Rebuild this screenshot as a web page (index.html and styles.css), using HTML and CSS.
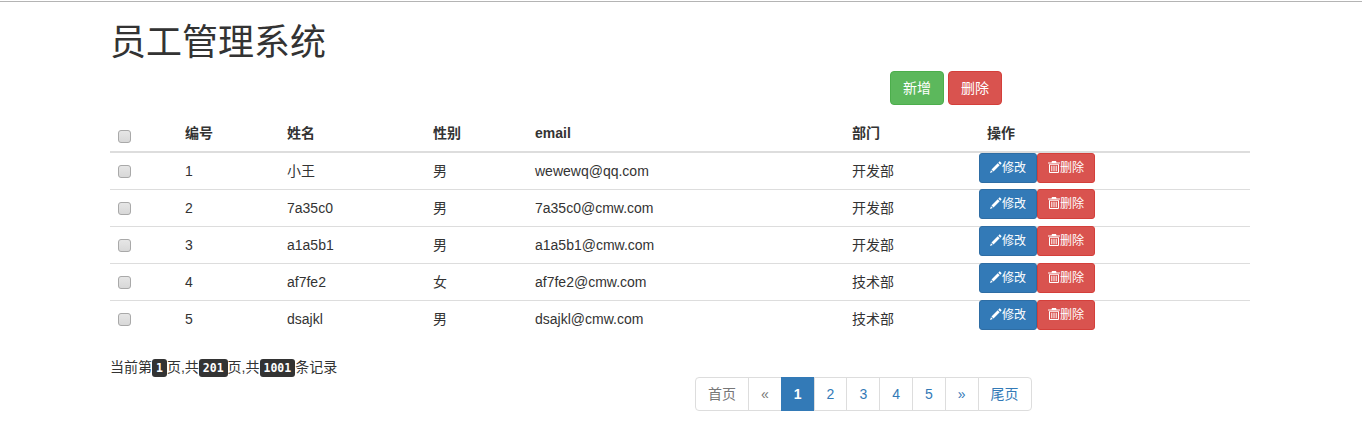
FILE: index.html
```html
<!DOCTYPE html>
<html lang="zh-CN">
<head>
<meta charset="utf-8">
<title>员工管理系统</title>
<link rel="stylesheet" href="styles.css">
</head>
<body>
<svg class="sprite" width="0" height="0" aria-hidden="true">
  <symbol id="pencil" viewBox="0 0 12 12"><path d="M9.700.3 11.700 2.300 10.300 3.700 8.300 1.700zM7.700 2.300 9.700 4.300 3.500 10.500 1.500 8.500zM1 9.200 2.800 11 0 12z"/></symbol>
  <symbol id="trash" viewBox="0 0 12 12"><path fill-rule="evenodd" d="M4 0h4l.5 1.500H12v1H0v-1h3.500zM1 3.200h10V11a1 1 0 0 1-1 1H2a1 1 0 0 1-1-1zm1 .8V11h8V4zm1.300 .8h1v5.500h-1zm2.200 0h1v5.500h-1zm2.200 0h1v5.500h-1z"/></symbol>
</svg>
<div class="container">
  <h1 class="title">员工管理系统</h1>
  <div class="actions">
    <button class="btn btn-success">新增</button>
    <button class="btn btn-danger">删除</button>
  </div>
  <table class="table">
    <colgroup>
      <col class="c-check"><col class="c-id"><col class="c-name"><col class="c-gender"><col class="c-email"><col class="c-dept"><col>
    </colgroup>
    <thead>
      <tr>
        <th><input type="checkbox" class="check"></th>
        <th>编号</th><th>姓名</th><th>性别</th><th>email</th><th>部门</th><th class="th-ops">操作</th>
      </tr>
    </thead>
    <tbody>
      <tr>
        <td><input type="checkbox" class="check"></td>
        <td>1</td><td>小王</td><td>男</td><td>wewewq@qq.com</td><td>开发部</td>
        <td class="ops"><div class="ops-group"><button class="btn btn-sm btn-primary"><svg class="icon"><use href="#pencil"/></svg>修改</button><button class="btn btn-sm btn-danger"><svg class="icon"><use href="#trash"/></svg>删除</button></div></td>
      </tr>
      <tr>
        <td><input type="checkbox" class="check"></td>
        <td>2</td><td>7a35c0</td><td>男</td><td>7a35c0@cmw.com</td><td>开发部</td>
        <td class="ops"><div class="ops-group"><button class="btn btn-sm btn-primary"><svg class="icon"><use href="#pencil"/></svg>修改</button><button class="btn btn-sm btn-danger"><svg class="icon"><use href="#trash"/></svg>删除</button></div></td>
      </tr>
      <tr>
        <td><input type="checkbox" class="check"></td>
        <td>3</td><td>a1a5b1</td><td>男</td><td>a1a5b1@cmw.com</td><td>开发部</td>
        <td class="ops"><div class="ops-group"><button class="btn btn-sm btn-primary"><svg class="icon"><use href="#pencil"/></svg>修改</button><button class="btn btn-sm btn-danger"><svg class="icon"><use href="#trash"/></svg>删除</button></div></td>
      </tr>
      <tr>
        <td><input type="checkbox" class="check"></td>
        <td>4</td><td>af7fe2</td><td>女</td><td>af7fe2@cmw.com</td><td>技术部</td>
        <td class="ops"><div class="ops-group"><button class="btn btn-sm btn-primary"><svg class="icon"><use href="#pencil"/></svg>修改</button><button class="btn btn-sm btn-danger"><svg class="icon"><use href="#trash"/></svg>删除</button></div></td>
      </tr>
      <tr>
        <td><input type="checkbox" class="check"></td>
        <td>5</td><td>dsajkl</td><td>男</td><td>dsajkl@cmw.com</td><td>技术部</td>
        <td class="ops"><div class="ops-group"><button class="btn btn-sm btn-primary"><svg class="icon"><use href="#pencil"/></svg>修改</button><button class="btn btn-sm btn-danger"><svg class="icon"><use href="#trash"/></svg>删除</button></div></td>
      </tr>
    </tbody>
  </table>
  <div class="footer">
    <div class="info">当前第<kbd>1</kbd>页,共<kbd>201</kbd>页,共<kbd>1001</kbd>条记录</div>
    <nav class="pager">
      <ul class="pagination">
        <li class="muted"><a href="#">首页</a></li>
        <li class="muted"><a href="#">«</a></li>
        <li class="active"><a href="#">1</a></li>
        <li><a href="#">2</a></li>
        <li><a href="#">3</a></li>
        <li><a href="#">4</a></li>
        <li><a href="#">5</a></li>
        <li><a href="#">»</a></li>
        <li><a href="#">尾页</a></li>
      </ul>
    </nav>
  </div>
</div>
</body>
</html>
```
FILE: styles.css
```css
* { box-sizing: border-box; }
html { padding-top: 1px; background: #fff; }
body {
  margin: 0;
  border-top: 1px solid #b4b4b4;
  font-family: "Liberation Sans", "Noto Sans CJK SC", sans-serif;
  font-size: 14px;
  line-height: 20px;
  color: #333;
  background: #fff;
}
.sprite { position: absolute; }
.container { width: 1140px; margin-left: 110px; }
.title {
  margin: 21px 0 8px;
  font-size: 36px;
  font-weight: 400;
  line-height: 39.6px;
}
.actions { display: flex; gap: 4px; padding-left: 780px; margin-bottom: 10px; }
.btn {
  display: inline-block;
  padding: 6px 12px;
  font: inherit;
  font-size: 14px;
  line-height: 20px;
  color: #fff;
  border: 1px solid transparent;
  border-radius: 4px;
  white-space: nowrap;
}
.btn-sm { padding: 5px 10px; font-size: 12px; line-height: 18px; border-radius: 3px; }
.btn-success { background: #5cb85c; border-color: #4cae4c; }
.btn-danger { background: #d9534f; border-color: #d43f3a; }
.btn-primary { background: #337ab7; border-color: #2e6da4; }
.icon { width: 12px; height: 12px; fill: currentColor; vertical-align: -1px; }
.table { width: 1140px; border-collapse: collapse; table-layout: fixed; margin-bottom: 20px; }
.c-check { width: 67px; }
.c-id { width: 102px; }
.c-name { width: 146px; }
.c-gender { width: 102px; }
.c-email { width: 317px; }
.c-dept { width: 127px; }
th, td { padding: 8px; text-align: left; vertical-align: top; }
th { border-bottom: 2px solid #ddd; font-weight: 700; vertical-align: bottom; }
td { border-top: 1px solid #ddd; }
thead + tbody tr:first-child td { border-top: 0; }
.th-ops { padding-left: 16px; }
td.ops { padding: 0 8px; }
.ops-group { display: flex; margin-top: -1px; }
tbody tr:first-child .ops-group { margin-top: 0; }
.check {
  appearance: none;
  display: block;
  width: 13px;
  height: 13px;
  margin: 4px 0 0;
  background: linear-gradient(#e6e6e6, #d8d8d8);
  border: 1px solid #a9a9a9;
  border-radius: 3px;
}
.footer { display: grid; grid-template-columns: 585px 1fr; }
.info { white-space: nowrap; }
kbd {
  padding: 2px 4px;
  font-family: "DejaVu Sans Mono", monospace;
  font-size: 11.5px;
  font-weight: 700;
  color: #fff;
  background: #333;
  border-radius: 3px;
}
.pager { padding-top: 20px; }
.pagination { display: flex; margin: 0; padding: 0; list-style: none; }
.pagination li a {
  display: block;
  margin-left: -1px;
  padding: 6px 12px;
  color: #337ab7;
  text-decoration: none;
  background: #fff;
  border: 1px solid #ddd;
}
.pagination li:first-child a { margin-left: 0; border-radius: 4px 0 0 4px; }
.pagination li:last-child a { border-radius: 0 4px 4px 0; }
.pagination .muted a { color: #777; }
.pagination .active a { color: #fff; font-weight: 700; background: #337ab7; border-color: #337ab7; }
```
